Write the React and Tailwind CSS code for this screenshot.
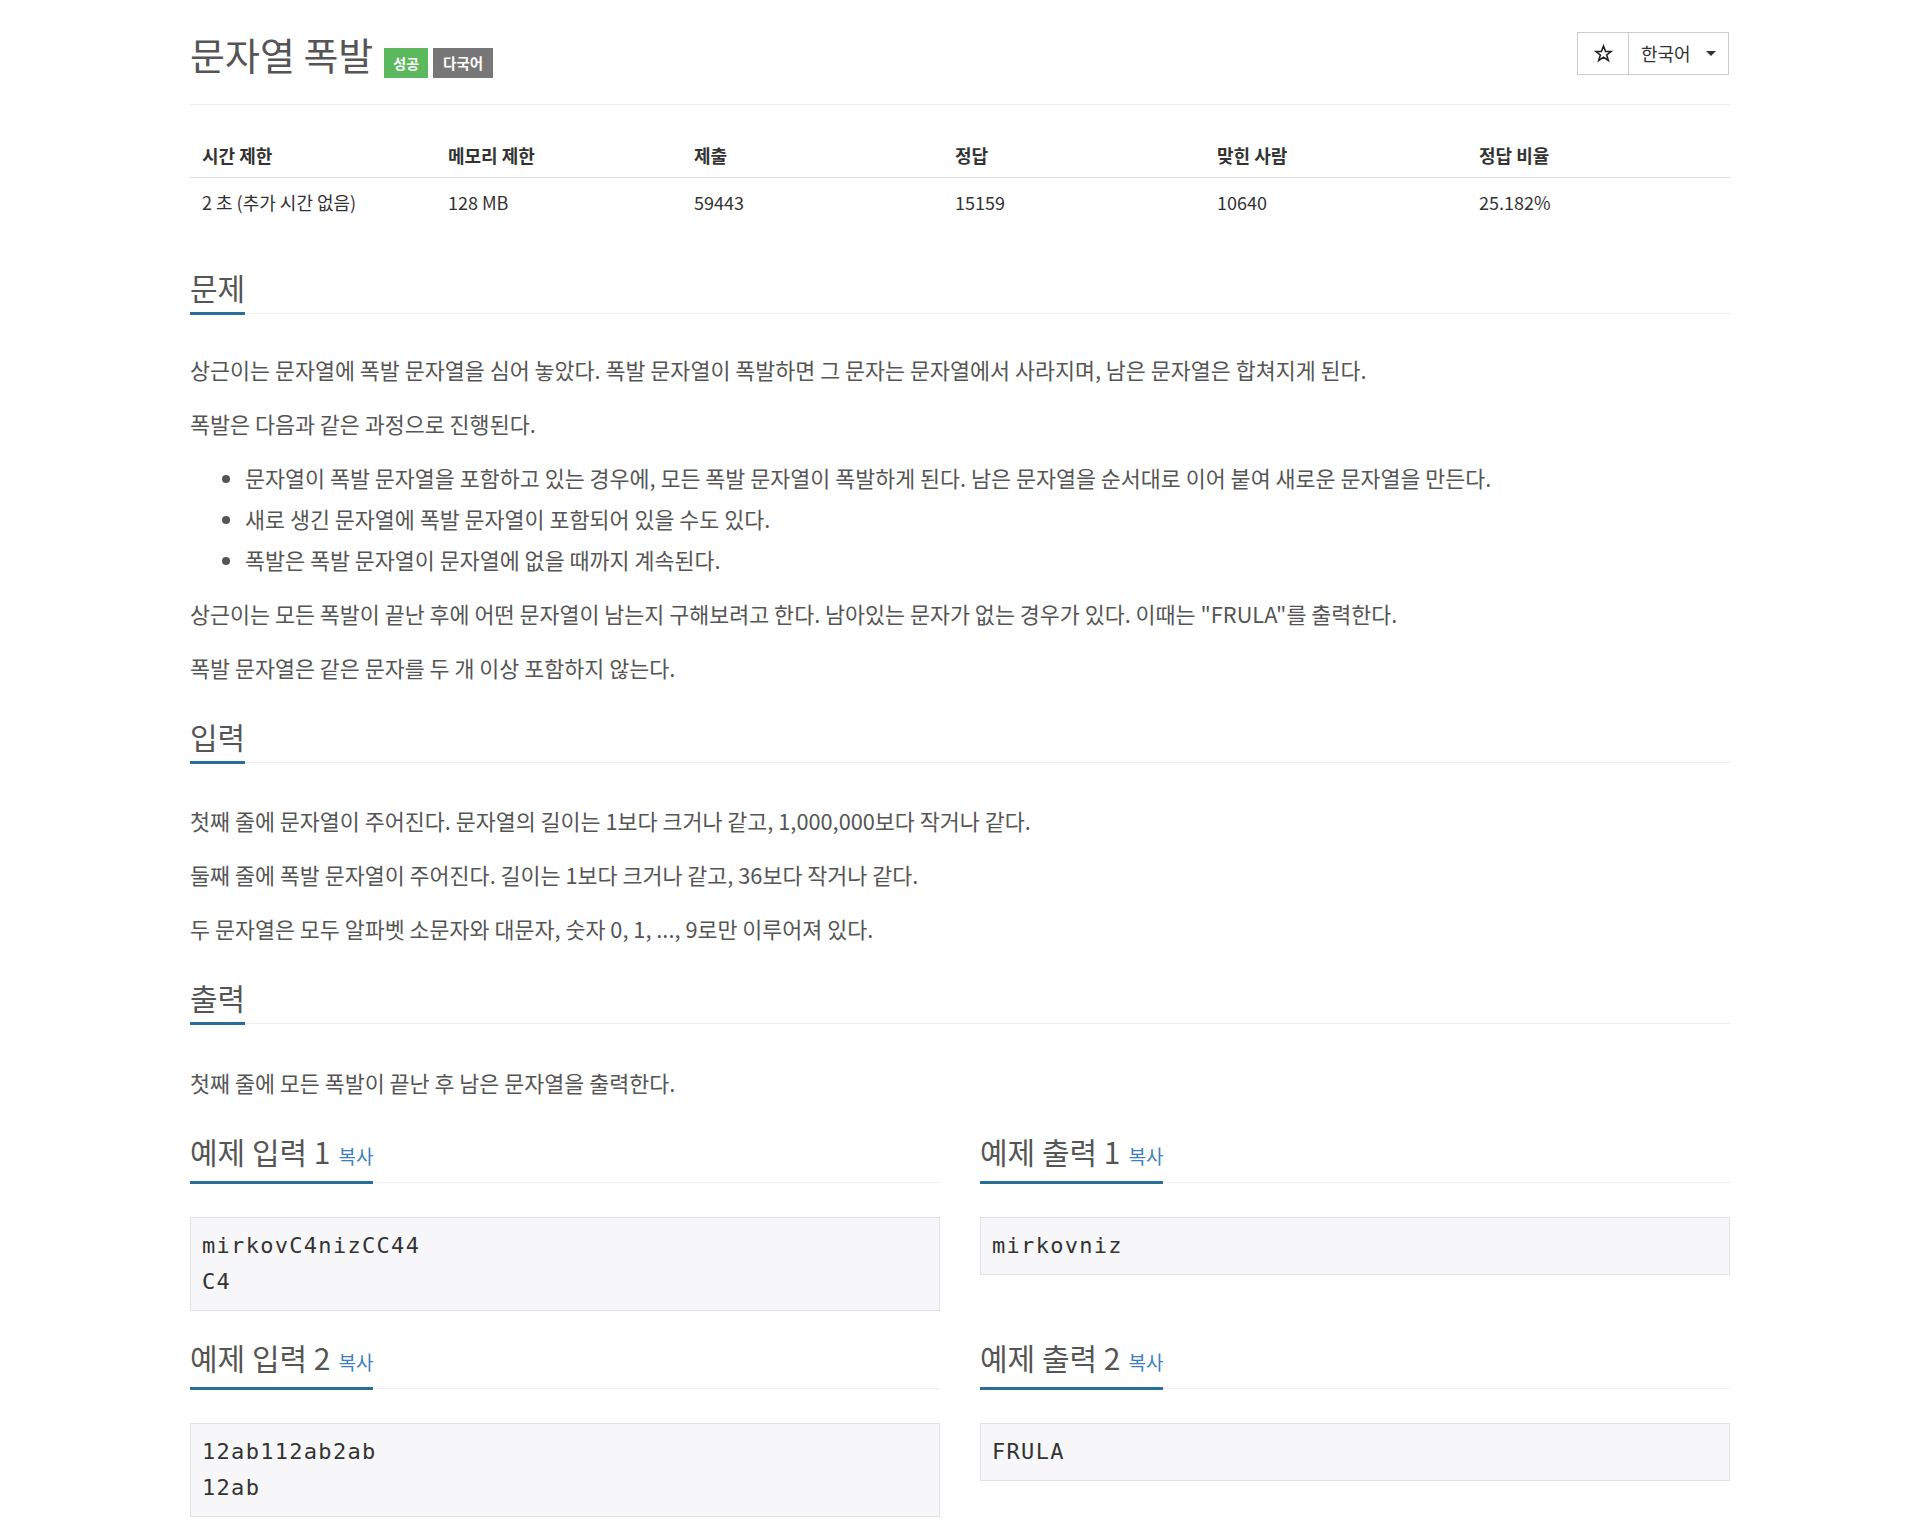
import React from 'react';

const font = { fontFamily: '"Noto Sans CJK KR", "Noto Sans", sans-serif' };

const stats = [
  { label: '시간 제한', value: '2 초 (추가 시간 없음)' },
  { label: '메모리 제한', value: '128 MB' },
  { label: '제출', value: '59443' },
  { label: '정답', value: '15159' },
  { label: '맞힌 사람', value: '10640' },
  { label: '정답 비율', value: '25.182%' },
];

const Headline = ({ children, copy }) => (
  <div className="border-b border-[#eee]">
    <h2 className="inline-block text-[30px] leading-[34px] pb-[8px] mb-[-2px] border-b-[3px] border-[#286e9a] text-[#555] font-normal">
      {children}
      {copy && <a className="ml-[8px] text-[19px] text-[#3b7fc0] cursor-pointer">복사</a>}
    </h2>
  </div>
);

const Sample = ({ title, lines }) => (
  <div>
    <Headline copy>{title}</Headline>
    <pre className="mt-[34px] bg-[#f7f7f9] border border-[#e1e1e8] px-[11px] py-[10px] text-[22px] leading-[36px] tracking-[1.3px] text-[#333] font-['DejaVu_Sans_Mono',monospace]">
      {lines.join('\n')}
    </pre>
  </div>
);

export default function App() {
  return (
    <div className="min-h-screen bg-white" style={font}>
      <div className="w-[1540px] mx-auto">
        {/* page header */}
        <div className="flex items-start justify-between pt-[32px] h-[105px] border-b border-[#eee]">
          <div className="flex items-start">
            <h1 className="mt-[1px] text-[38px] leading-[42px] text-[#555] font-normal">문자열 폭발</h1>
            <span className="ml-[11px] mt-[16px] h-[30px] px-[9px] flex items-center bg-[#5cb85c] text-white text-[14px] font-bold">성공</span>
            <span className="ml-[5px] mt-[16px] h-[30px] px-[10px] flex items-center bg-[#777] text-white text-[14.5px] font-bold">다국어</span>
          </div>
          <div className="flex h-[43px] mr-[1px] text-[#333]">
            <button className="w-[52px] border border-[#ccc] flex items-center justify-center">
              <svg width="19" height="19" viewBox="0 0 24 24" fill="none" stroke="#222" strokeWidth="2" strokeLinejoin="miter">
                <polygon points="12,2.5 14.6,9.4 21.8,9.4 16,13.8 18.1,20.8 12,16.6 5.9,20.8 8,13.8 2.2,9.4 9.4,9.4" />
              </svg>
            </button>
            <button className="w-[100px] border border-l-0 border-[#ccc] flex items-center pl-[12px] text-[18px]">
              한국어
              <span className="ml-[15px] w-0 h-0 border-x-[5px] border-x-transparent border-t-[5px] border-t-[#333]"></span>
            </button>
          </div>
        </div>

        {/* stats table */}
        <div className="mt-[32px] text-[18px] text-[#333]">
          <div className="grid grid-cols-[246px_246px_261px_262px_262px_1fr] border-b border-[#ddd]">
            {stats.map(s => (
              <div key={s.label} className="pl-[12px] pt-[6px] pb-[10px] leading-[24px] font-bold">{s.label}</div>
            ))}
          </div>
          <div className="grid grid-cols-[246px_246px_261px_262px_262px_1fr]">
            {stats.map(s => (
              <div key={s.label} className="pl-[12px] pt-[12px] pb-[12px] leading-[24px]">{s.value}</div>
            ))}
          </div>
        </div>

        {/* problem */}
        <div className="mt-[44px]">
          <Headline>문제</Headline>
          <div className="mt-[41px] flex flex-col gap-[24px] text-[21.75px] leading-[30px] text-[#555]">
            <p>상근이는 문자열에 폭발 문자열을 심어 놓았다. 폭발 문자열이 폭발하면 그 문자는 문자열에서 사라지며, 남은 문자열은 합쳐지게 된다.</p>
            <p>폭발은 다음과 같은 과정으로 진행된다.</p>
            <ul className="list-disc pl-[55px] flex flex-col gap-[11px]">
              <li>문자열이 폭발 문자열을 포함하고 있는 경우에, 모든 폭발 문자열이 폭발하게 된다. 남은 문자열을 순서대로 이어 붙여 새로운 문자열을 만든다.</li>
              <li>새로 생긴 문자열에 폭발 문자열이 포함되어 있을 수도 있다.</li>
              <li>폭발은 폭발 문자열이 문자열에 없을 때까지 계속된다.</li>
            </ul>
            <p>상근이는 모든 폭발이 끝난 후에 어떤 문자열이 남는지 구해보려고 한다. 남아있는 문자가 없는 경우가 있다. 이때는 "FRULA"를 출력한다.</p>
            <p>폭발 문자열은 같은 문자를 두 개 이상 포함하지 않는다.</p>
          </div>
        </div>

        {/* input */}
        <div className="mt-[36px]">
          <Headline>입력</Headline>
          <div className="mt-[43px] flex flex-col gap-[24px] text-[21.75px] leading-[30px] text-[#555]">
            <p>첫째 줄에 문자열이 주어진다. 문자열의 길이는 1보다 크거나 같고, 1,000,000보다 작거나 같다.</p>
            <p>둘째 줄에 폭발 문자열이 주어진다. 길이는 1보다 크거나 같고, 36보다 작거나 같다.</p>
            <p>두 문자열은 모두 알파벳 소문자와 대문자, 숫자 0, 1, ..., 9로만 이루어져 있다.</p>
          </div>
        </div>

        {/* output */}
        <div className="mt-[36px]">
          <Headline>출력</Headline>
          <div className="mt-[44px] text-[21.75px] leading-[30px] text-[#555]">
            <p>첫째 줄에 모든 폭발이 끝난 후 남은 문자열을 출력한다.</p>
          </div>
        </div>

        {/* samples */}
        <div className="mt-[36px] grid grid-cols-2 gap-x-[40px] gap-y-[29px] pb-[13px]">
          <Sample title="예제 입력 1" lines={['mirkovC4nizCC44', 'C4']} />
          <Sample title="예제 출력 1" lines={['mirkovniz']} />
          <Sample title="예제 입력 2" lines={['12ab112ab2ab', '12ab']} />
          <Sample title="예제 출력 2" lines={['FRULA']} />
        </div>
      </div>
    </div>
  );
}
